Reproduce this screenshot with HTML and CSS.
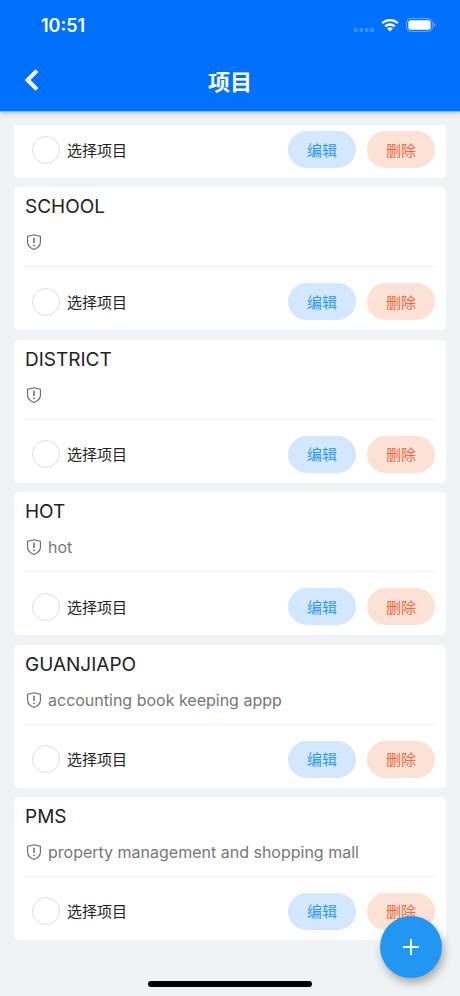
FILE: index.html
```html
<!DOCTYPE html>
<html lang="zh-CN">
<head>
<meta charset="utf-8">
<meta name="viewport" content="width=device-width, initial-scale=1">
<title>项目</title>
<link rel="stylesheet" href="styles.css">
</head>
<body>
<svg class="sprite" aria-hidden="true">
  <symbol id="shield" viewBox="0 0 16 16">
    <path d="M1.600 2.200C3.800 1.900 5.800 1.300 8 .7c2.200.6 4.200 1.200 6.400 1.500v6c0 3.500-3.100 5.900-6.400 7.200-3.300-1.300-6.400-3.700-6.400-7.200z" fill="none" stroke="currentColor" stroke-width="1.100" stroke-linejoin="round"/>
    <path d="M8 3.700v5.300" fill="none" stroke="currentColor" stroke-width="1.500"/>
    <circle cx="8" cy="11.300" r=".9" fill="currentColor"/>
  </symbol>
</svg>
<header class="header">
  <div class="status">
    <span class="time">10:51</span>
    <span class="indicators">
      <svg width="20" height="4" viewBox="0 0 20 4" class="signal" aria-hidden="true"><g fill="#fff" opacity=".25"><rect width="3.600" height="4" rx="1.300"/><rect x="5.500" width="3.600" height="4" rx="1.300"/><rect x="11" width="3.600" height="4" rx="1.300"/><rect x="16.400" width="3.600" height="4" rx="1.300"/></g></svg>
      <svg width="18" height="14" viewBox="0 0 18 14" aria-hidden="true"><g fill="none" stroke="#fff" stroke-width="2.300"><path d="M1.200 5.200a11.200 11.200 0 0 1 15.600 0"/><path d="M4.200 8.400a7 7 0 0 1 9.600 0"/></g><path d="M6.100 10.500a4.300 4.300 0 0 1 5.800 0L9 13.500z" fill="#fff"/></svg>
      <svg width="30" height="14" viewBox="0 0 30 14" aria-hidden="true"><rect x=".6" y=".6" width="25.800" height="12.800" rx="4" fill="none" stroke="#fff" stroke-opacity=".4"/><rect x="2.300" y="2.300" width="22.400" height="9.400" rx="2.500" fill="#fff"/><path d="M27.800 4.800q1.800.6 1.800 2.200t-1.800 2.200z" fill="#fff" opacity=".4"/></svg>
    </span>
  </div>
  <nav class="navbar">
    <button class="back" type="button" aria-label="返回"><svg width="16" height="24" viewBox="0 0 16 24" aria-hidden="true"><path d="M13 2.600 3.500 12l9.500 9.400" fill="none" stroke="#fff" stroke-width="4"/></svg></button>
    <h1>项目</h1>
  </nav>
</header>
<main class="list">
  <article class="card card-scrolled">
    <div class="actions"><label class="choice"><input type="radio" name="project">选择项目</label><button class="pill edit" type="button">编辑</button><button class="pill delete" type="button">删除</button></div>
  </article>
  <article class="card">
    <h2>SCHOOL</h2>
    <p class="desc"><svg class="shield" aria-hidden="true"><use href="#shield"/></svg></p>
    <div class="actions"><label class="choice"><input type="radio" name="project">选择项目</label><button class="pill edit" type="button">编辑</button><button class="pill delete" type="button">删除</button></div>
  </article>
  <article class="card">
    <h2>DISTRICT</h2>
    <p class="desc"><svg class="shield" aria-hidden="true"><use href="#shield"/></svg></p>
    <div class="actions"><label class="choice"><input type="radio" name="project">选择项目</label><button class="pill edit" type="button">编辑</button><button class="pill delete" type="button">删除</button></div>
  </article>
  <article class="card">
    <h2>HOT</h2>
    <p class="desc"><svg class="shield" aria-hidden="true"><use href="#shield"/></svg>hot</p>
    <div class="actions"><label class="choice"><input type="radio" name="project">选择项目</label><button class="pill edit" type="button">编辑</button><button class="pill delete" type="button">删除</button></div>
  </article>
  <article class="card">
    <h2>GUANJIAPO</h2>
    <p class="desc"><svg class="shield" aria-hidden="true"><use href="#shield"/></svg>accounting book keeping appp</p>
    <div class="actions"><label class="choice"><input type="radio" name="project">选择项目</label><button class="pill edit" type="button">编辑</button><button class="pill delete" type="button">删除</button></div>
  </article>
  <article class="card">
    <h2>PMS</h2>
    <p class="desc"><svg class="shield" aria-hidden="true"><use href="#shield"/></svg>property management and shopping mall</p>
    <div class="actions"><label class="choice"><input type="radio" name="project">选择项目</label><button class="pill edit" type="button">编辑</button><button class="pill delete" type="button">删除</button></div>
  </article>
</main>
<button class="fab" type="button" aria-label="添加项目"><svg width="16" height="16" viewBox="0 0 16 16" aria-hidden="true"><path d="M8 0v16M0 8h16" stroke="#fff" stroke-width="2"/></svg></button>
<div class="home-indicator"></div>
</body>
</html>
```
FILE: styles.css
```css
* { box-sizing: border-box; }

body {
  margin: 0;
  min-height: 100vh;
  display: flex;
  flex-direction: column;
  background: #eff3f6;
  color: #222;
  font-family: Inter, "Noto Sans CJK SC", sans-serif;
}

h1, h2, p { margin: 0; font-weight: 400; }
button { border: 0; padding: 0; font: inherit; cursor: pointer; }
svg { display: block; }
.sprite { position: absolute; width: 0; height: 0; }

.header {
  background: #0070ff;
  color: #fff;
  border-bottom: 1px solid #86bdf5;
  box-shadow: 0 1px 5px rgba(0, 0, 0, .24);
}

.status {
  height: 50px;
  padding: 0 24px 0 41px;
  display: flex;
  align-items: center;
  justify-content: space-between;
}
.time { font-size: 18px; font-weight: 600; }
.indicators { display: flex; align-items: center; gap: 7px; }
.signal { margin-top: 10px; }

.navbar {
  height: 61px;
  padding: 0 24px 2px;
  display: grid;
  grid-template-columns: 16px 1fr 16px;
  align-items: center;
}
.back { background: none; }
h1 {
  font-family: "Noto Sans CJK SC", sans-serif;
  font-size: 22px;
  font-weight: 700;
  line-height: 32px;
  text-align: center;
}

.list {
  flex: 1;
  padding: 13px 14px 56px;
  display: flex;
  flex-direction: column;
  justify-content: space-between;
}

.card {
  padding: 8px 11px 10px;
  border-radius: 5px;
  background: #fff;
}
.card-scrolled { padding-top: 6px; border-radius: 0 0 5px 5px; }

h2 { font-size: 19px; line-height: 24px; }

.desc {
  margin: 11px 0 16px;
  height: 37px;
  padding-bottom: 12px;
  border-bottom: 1px solid #f1f1f1;
  display: flex;
  align-items: center;
  gap: 6px;
  color: #777;
  font-size: 16px;
  line-height: 24px;
}
.shield { width: 16px; height: 16px; margin-left: 1px; color: #666; }

.actions {
  display: flex;
  align-items: center;
  gap: 11px;
  font-family: "Noto Sans CJK SC", sans-serif;
  font-size: 15px;
  line-height: 22px;
}
.choice {
  flex: 1;
  padding-left: 7px;
  display: flex;
  align-items: center;
  gap: 7px;
}
.choice input {
  appearance: none;
  width: 28px;
  height: 28px;
  margin: 0;
  border: 1px solid #ddd;
  border-radius: 50%;
}
.choice input:checked { border: 8px solid #2196f3; }

.pill { width: 68px; height: 37px; border-radius: 19px; }
.edit { background: #d3e8fe; color: #2b98f0; }
.delete { background: #fce1d6; color: #ec6c3a; }

.fab {
  position: fixed;
  right: 18px;
  bottom: 18px;
  width: 62px;
  height: 62px;
  display: grid;
  place-items: center;
  border-radius: 50%;
  background: #2196f3;
  box-shadow: 2px 5px 9px rgba(0, 0, 0, .3);
}

.home-indicator {
  position: fixed;
  bottom: 9px;
  left: 50%;
  width: 164px;
  height: 6px;
  margin-left: -82px;
  border-radius: 3px;
  background: #000;
}
```
